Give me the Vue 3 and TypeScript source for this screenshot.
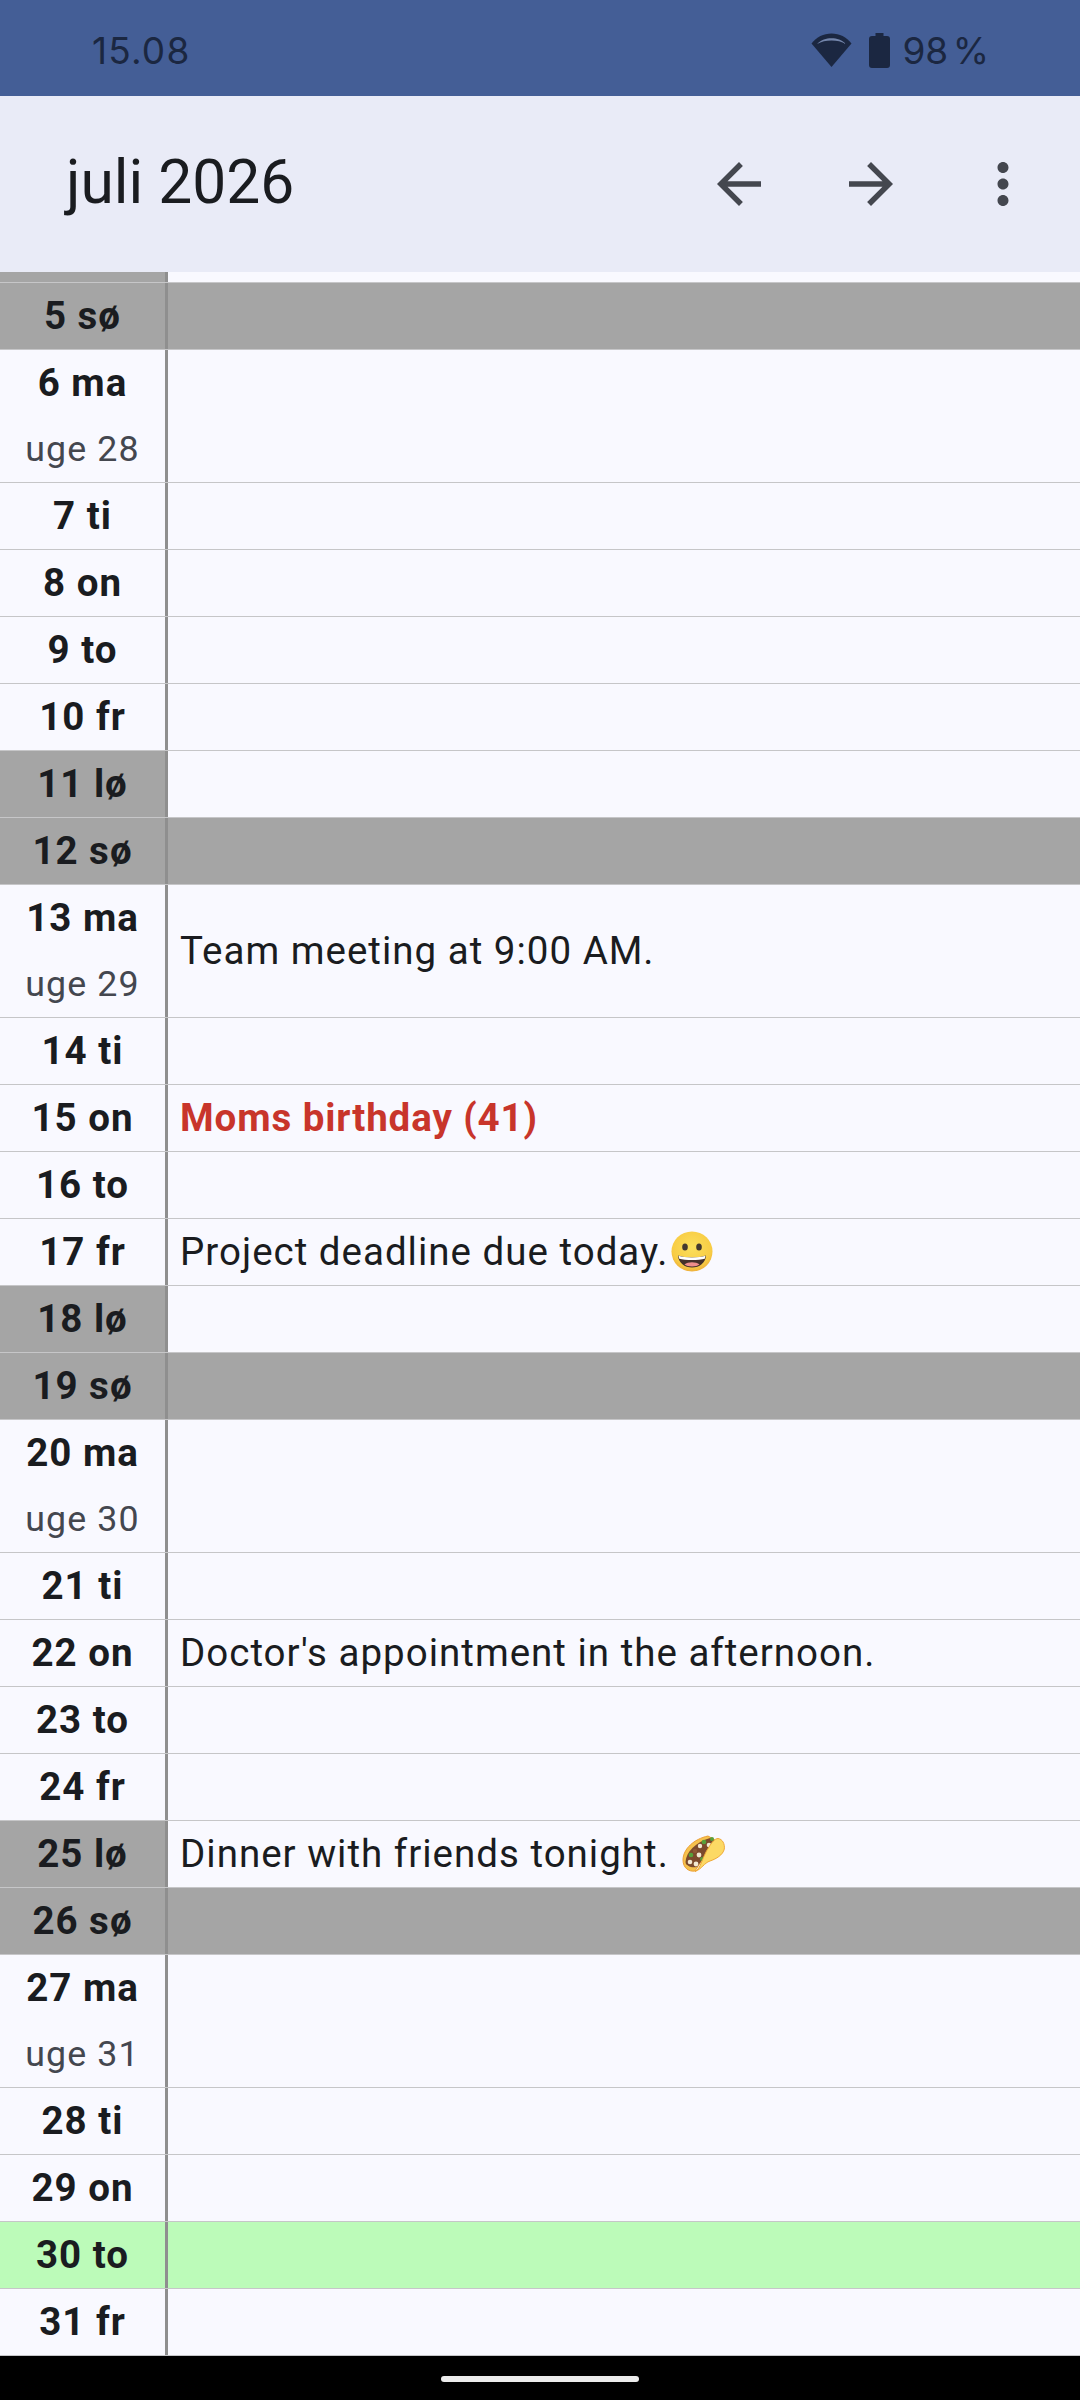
<template>
  <div class="screen">
    <div class="status-bar">
      <span class="clock">15.08</span>
      <div class="status-right">
        <svg class="wifi" viewBox="0 0 41 34" width="41" height="34">
          <path d="M20.500 34 L0.500 10.500 C5.500 4 12.500 0.500 20.500 0.500 C28.500 0.500 35.500 4 40.500 10.500 Z" fill="#1b2741" />
          <path d="M6 11 C10.500 6.800 15 5.200 20.500 5.200 C26 5.200 30.500 6.800 35 11 C30.500 8.500 26 7.400 20.500 7.400 C15 7.400 10.500 8.500 6 11 Z" fill="#7385ab" />
        </svg>
        <svg class="battery" viewBox="0 0 21 35" width="21" height="35">
          <path d="M6.500 0 H14.500 V3 H18 Q21 3 21 6 V32 Q21 35 18 35 H3 Q0 35 0 32 V6 Q0 3 3 3 H6.500 Z" fill="#1b2741" />
        </svg>
        <span class="battery-text">98 %</span>
      </div>
    </div>

    <header class="app-bar">
      <h1 class="title">juli 2026</h1>
      <div class="actions">
        <button class="icon-btn">
          <svg viewBox="0 0 24 24" width="66" height="66"><path d="M20 11H7.830l5.590-5.590L12 4l-8 8 8 8 1.410-1.410L7.830 13H20v-2z" /></svg>
        </button>
        <button class="icon-btn">
          <svg viewBox="0 0 24 24" width="66" height="66"><path d="M12 4l-1.410 1.410L16.170 11H4v2h12.170l-5.580 5.590L12 20l8-8z" /></svg>
        </button>
        <button class="icon-btn">
          <svg viewBox="0 0 24 24" width="66" height="66"><path d="M12 8c1.100 0 2-.9 2-2s-.9-2-2-2-2 .9-2 2 .9 2 2 2zm0 2c-1.100 0-2 .9-2 2s.9 2 2 2 2-.9 2-2-.9-2-2-2zm0 6c-1.100 0-2 .9-2 2s.9 2 2 2 2-.9 2-2-.9-2-2-2z" /></svg>
        </button>
      </div>
    </header>

    <main class="calendar">
      <div class="row stub">
        <div class="day-cell grey"></div>
        <div class="note-cell"></div>
      </div>
      <div v-for="d in days" :key="d.label" class="row" :class="{ today: d.today, tall: d.week }">
        <div class="day-cell" :class="{ grey: d.weekend }">
          <span class="day-label">{{ d.label }}</span>
          <span v-if="d.week" class="week-label">uge {{ d.week }}</span>
        </div>
        <div class="note-cell" :class="{ grey: d.sunday }">
          <span v-if="d.note" class="note" :class="{ birthday: d.birthday }">{{ d.note }}</span>
          <svg v-if="d.emoji === 'smile'" class="emoji smile" viewBox="0 0 42 41" width="42" height="41">
            <defs>
              <radialGradient id="face" cx="0.5" cy="0.4" r="0.6">
                <stop offset="0" stop-color="#fbdf5c" />
                <stop offset="0.8" stop-color="#f8cc44" />
                <stop offset="1" stop-color="#eeb03c" />
              </radialGradient>
            </defs>
            <ellipse cx="21" cy="20.500" rx="20.500" ry="20" fill="url(#face)" />
            <ellipse cx="14" cy="16" rx="2.800" ry="3.500" fill="#43372f" />
            <ellipse cx="28" cy="16" rx="2.800" ry="3.500" fill="#43372f" />
            <path d="M7 24.500 C14 27 28 27 35 24.500 C34.500 32 28.500 36.500 21 36.500 C13.500 36.500 7.500 32 7 24.500 Z" fill="#44302b" />
            <path d="M7.500 24.800 C14 27 28 27 34.500 24.800 L33.800 27.800 C28 29.500 14 29.500 8.200 27.800 Z" fill="#fff" />
            <path d="M13.500 33.500 C17 30.500 25 30.500 28.500 33.500 C25.500 36 16.500 36 13.500 33.500 Z" fill="#ee8d8b" />
          </svg>
          <svg v-if="d.emoji === 'taco'" class="emoji taco" viewBox="0 0 43 37" width="43" height="37">
            <path d="M1 25 C1 14 12 4 26 1 L33 5 L13 36 C7 37 1 33 1 25 Z" fill="#f6c24c" stroke="#eb9f35" stroke-width="1" />
            <path d="M3.500 27 C4 17 14 7 28 3 L34 6 L15 32 C9 33 4 31 3.500 27 Z" fill="#7c4a2c" />
            <circle cx="9" cy="20" r="2.300" fill="#58a03b" />
            <circle cx="18" cy="11" r="2.200" fill="#f3e9d2" />
            <circle cx="13" cy="16" r="2.200" fill="#8f5a35" />
            <circle cx="22" cy="7" r="2.300" fill="#58a03b" />
            <circle cx="27" cy="10" r="2.300" fill="#f3e9d2" />
            <circle cx="17" cy="20" r="2.400" fill="#f3e9d2" />
            <circle cx="30" cy="4" r="2" fill="#58a03b" />
            <circle cx="8" cy="27" r="2.300" fill="#f3e9d2" />
            <circle cx="14" cy="29" r="2.400" fill="#f3e9d2" />
            <circle cx="20" cy="24" r="2" fill="#58a03b" />
            <path d="M13 36.500 C19 34 20 22 27 12 C30 7 33 3.500 36 3.500 C40.500 4 43 9 42.300 14 C41 20 34 24 28 26 C22 28 20 34 13 36.500 Z" fill="#fcd964" stroke="#efa938" stroke-width="1" />
          </svg>
        </div>
      </div>
    </main>

    <div class="nav-bar"><span class="home-pill"></span></div>
  </div>
</template>

<script setup lang="ts">
interface Day {
  label: string
  week?: number
  weekend?: boolean
  sunday?: boolean
  today?: boolean
  birthday?: boolean
  note?: string
  emoji?: 'smile' | 'taco'
}

const names = ['ma', 'ti', 'on', 'to', 'fr', 'lø', 'sø']

const notes: Record<number, Partial<Day>> = {
  13: { note: 'Team meeting at 9:00 AM.' },
  15: { note: 'Moms birthday (41)', birthday: true },
  17: { note: 'Project deadline due today.', emoji: 'smile' },
  22: { note: "Doctor's appointment in the afternoon." },
  25: { note: 'Dinner with friends tonight. ', emoji: 'taco' }
}

// July 2026: the 6th is a monday, week 28
const days: Day[] = []
for (let n = 5; n <= 31; n++) {
  const idx = (n + 1) % 7
  days.push({
    label: `${n} ${names[idx]}`,
    week: idx === 0 ? 28 + (n - 6) / 7 : undefined,
    weekend: idx >= 5,
    sunday: idx === 6,
    today: n === 30,
    ...notes[n]
  })
}
</script>

<style>
html,
body {
  margin: 0;
  background: #000;
}
</style>

<style scoped>
.screen {
  width: 1080px;
  height: 2400px;
  display: flex;
  flex-direction: column;
  overflow: hidden;
  font-family: Roboto, sans-serif;
  color: #1a1c20;
}

.status-bar {
  height: 96px;
  flex: none;
  background: #445e96;
  color: #1b2741;
  display: flex;
  align-items: center;
  justify-content: space-between;
  padding: 4px 91px 0 92px;
  box-sizing: border-box;
  font-family: Inter, sans-serif;
  font-size: 37px;
}

.clock {
  letter-spacing: 1.200px;
}

.status-right {
  display: flex;
  align-items: center;
}

.battery-text {
  word-spacing: -6px;
}

.wifi {
  margin-right: 17px;
}

.battery {
  margin-right: 12px;
}

.app-bar {
  height: 176px;
  flex: none;
  background: #e9ebf7;
  display: flex;
  align-items: center;
  justify-content: space-between;
  padding: 0 11px 0 66px;
  box-sizing: border-box;
}

.title {
  margin: -2px 0 0;
  font-size: 60.500px;
  font-weight: 400;
  line-height: 1;
}

.actions {
  display: flex;
}

.icon-btn {
  width: 132px;
  height: 132px;
  padding: 0;
  border: none;
  background: none;
  display: flex;
  align-items: center;
  justify-content: center;
}

.icon-btn svg {
  fill: #44474f;
}

.calendar {
  flex: 1;
  background: #f9f9ff;
}

.row {
  height: 67px;
  display: flex;
  box-sizing: border-box;
  border-bottom: 1px solid #c6c6c8;
}

.row.tall {
  height: 133px;
}

.row.stub {
  height: 11px;
}

.row.today {
  background: #bcfbb9;
}

.day-cell {
  width: 168px;
  flex: none;
  box-sizing: border-box;
  border-right: 3px solid #8f8f8f;
  display: flex;
  flex-direction: column;
  align-items: center;
  justify-content: space-around;
}

.note-cell {
  flex: 1;
  display: flex;
  align-items: center;
  padding: 0 0 2px 12px;
}

.grey {
  background: #a5a5a5;
}

.day-label {
  font-size: 38.500px;
  font-weight: 700;
  letter-spacing: 1px;
  line-height: 66px;
}

.week-label {
  font-size: 35.750px;
  letter-spacing: 1.100px;
  line-height: 66px;
  color: #44474f;
}

.note {
  font-size: 38.500px;
  letter-spacing: 1px;
  white-space: pre;
}

.note.birthday {
  font-weight: 700;
  color: #c8352b;
  letter-spacing: 0.900px;
}

.emoji {
  flex: none;
  margin-left: 3px;
}

.nav-bar {
  height: 45px;
  flex: none;
  background: #000;
  display: flex;
  align-items: center;
  justify-content: center;
}

.home-pill {
  width: 198px;
  height: 6px;
  border-radius: 3px;
  background: #ececec;
}
</style>
